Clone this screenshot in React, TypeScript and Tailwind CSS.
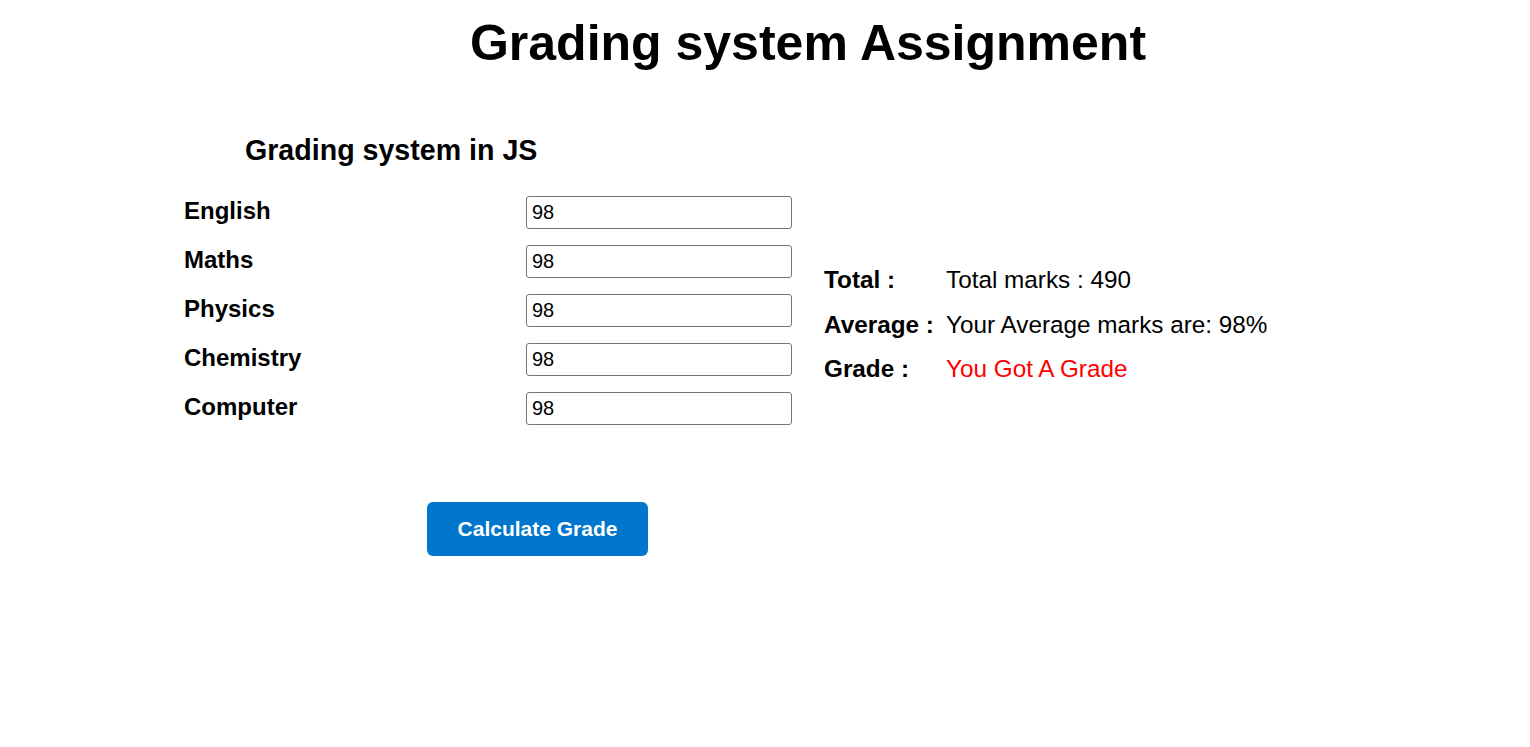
const subjects = ['English', 'Maths', 'Physics', 'Chemistry', 'Computer'];

const App = () => {
    return (
        <div className="min-h-screen w-full bg-white text-black font-['Liberation_Sans',Arial,sans-serif]">
            {/* Page heading */}
            <h1 className="pl-[86px] pt-[14px] text-center text-[50px] font-bold leading-[58px]">
                Grading system Assignment
            </h1>

            <h2 className="ml-[245px] mt-[61px] text-[28.6px] font-bold leading-[35px]">Grading system in JS</h2>

            <div className="ml-[184px] mt-[28px] flex items-start">
                {/* Marks form */}
                <div className="flex flex-col gap-[16px]">
                    {subjects.map((s) => (
                        <div key={s} className="flex items-center">
                            <label className="w-[342px] text-[24px] font-bold leading-[28px] -mt-[3px]">{s}</label>
                            <input
                                type="text"
                                defaultValue="98"
                                className="h-[33px] w-[266px] rounded-[3px] border border-[#767676] bg-white px-[5px] text-[20px] text-black outline-none"
                            />
                        </div>
                    ))}
                </div>

                {/* Result table */}
                <div className="ml-[32px] mt-[62px] grid grid-cols-[122px_auto] text-[24.3px] leading-[44.5px]">
                    <span className="font-bold">Total :</span>
                    <span>Total marks : 490</span>
                    <span className="font-bold">Average :</span>
                    <span>Your Average marks are: 98%</span>
                    <span className="font-bold">Grade :</span>
                    <span className="text-[#ff0000]">You Got A Grade</span>
                </div>
            </div>

            <div className="ml-[427px] mt-[77px]">
                <button className="h-[54px] w-[221px] rounded-[6px] bg-[#0077cc] text-[21px] font-bold text-white">
                    Calculate Grade
                </button>
            </div>
        </div>
    );
};

export default App;
